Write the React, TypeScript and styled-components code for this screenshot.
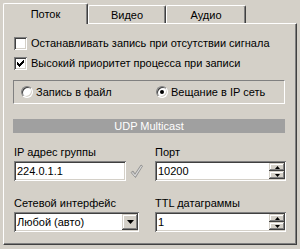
import styled, { createGlobalStyle } from 'styled-components';

const Global = createGlobalStyle`
    html, body {
        margin: 0;
        padding: 0;
        background: #d4d0c8;
    }
    * {
        box-sizing: border-box;
    }
`;

const face = '#d4d0c8';
const sunken = `inset 1px 1px #808080, inset -1px -1px #ffffff, inset 2px 2px #404040, inset -2px -2px ${face}`;
const raised = `inset -1px -1px #404040, inset 1px 1px ${face}, inset -2px -2px #808080, inset 2px 2px #ffffff`;

const Window = styled.div`
    width: 300px;
    height: 249px;
    padding: 3px 3px 4px 3px;
    background: ${face};
    font-family: "Liberation Sans", Arial, sans-serif;
    font-size: 11px;
    color: #000;
    display: flex;
    flex-direction: column;
`;

const TabStrip = styled.div`
    display: flex;
    align-items: flex-end;
    height: 20px;
    position: relative;
    z-index: 1;
`;

const Tab = styled.div<{ $active?: boolean; $w: number }>`
    width: ${p => p.$w}px;
    height: ${p => (p.$active ? 21 : 18)}px;
    margin-bottom: ${p => (p.$active ? -1 : 0)}px;
    background: ${face};
    border-left: 1px solid #fff;
    border-top: 1px solid #fff;
    border-right: 1px solid #404040;
    box-shadow: inset -1px 0 #808080;
    border-radius: 2px 2px 0 0;
    display: flex;
    justify-content: center;
    padding-top: ${p => (p.$active ? 4 : 3)}px;
    line-height: 13px;
`;

const Panel = styled.div`
    flex: 1;
    border-left: 1px solid #fff;
    border-top: 1px solid #fff;
    border-right: 1px solid #404040;
    border-bottom: 1px solid #404040;
    box-shadow: inset -1px -1px #808080;
    padding: 13px 9px 0 10px;
    display: flex;
    flex-direction: column;
`;

const CheckRow = styled.label<{ $gap?: number }>`
    display: flex;
    align-items: center;
    gap: 4px;
    height: 13px;
    margin-bottom: ${p => p.$gap ?? 0}px;
    line-height: 13px;
`;

const Box = styled.span`
    width: 13px;
    height: 13px;
    background: #fff;
    box-shadow: ${sunken};
    display: block;
    flex: none;
`;

const Tick = () => (
    <svg width="13" height="13" viewBox="0 0 13 13" shapeRendering="crispEdges" style={{ display: 'block' }}>
        {[[3, 5], [4, 6], [5, 7], [6, 6], [7, 5], [8, 4], [9, 3]].map(([x, y]) => (
            <rect key={x} x={x} y={y} width="1" height="3" fill="#000" />
        ))}
    </svg>
);

const RadioGroup = styled.div`
    margin: 10px 0 0 -1px;
    width: 272px;
    height: 24px;
    border-top: 1px solid #808080;
    border-left: 1px solid #808080;
    border-bottom: 1px solid #fff;
    border-right: 1px solid #fff;
    display: grid;
    grid-template-columns: 135px 1fr;
    align-items: center;
    padding-left: 7px;
`;

const RadioItem = styled.label`
    display: flex;
    align-items: center;
    gap: 3px;
    line-height: 13px;
`;

const Radio = styled.span<{ $on?: boolean }>`
    width: 12px;
    height: 12px;
    border-radius: 50%;
    background: #fff;
    border: 1px solid;
    border-color: #808080 #ffffff #ffffff #808080;
    box-shadow: inset 1px 1px #404040, inset -1px -1px ${face};
    display: flex;
    align-items: center;
    justify-content: center;
    flex: none;

    &::after {
        content: '';
        width: 4px;
        height: 4px;
        border-radius: 50%;
        background: #000;
        display: ${p => (p.$on ? 'block' : 'none')};
    }
`;

const SectionBar = styled.div`
    margin: 15px 0 0 -1px;
    width: 272px;
    height: 14px;
    background: #a0a0a0;
    color: #fff;
    text-align: center;
    line-height: 14px;
`;

const FieldGrid = styled.div`
    margin-top: 13px;
    display: grid;
    grid-template-columns: 141px 131px;
    row-gap: 16px;
`;

const Field = styled.div`
    display: flex;
    flex-direction: column;
    gap: 2px;
`;

const Label = styled.div`
    height: 13px;
    line-height: 13px;
`;

const InputRow = styled.div`
    display: flex;
    align-items: center;
    gap: 4px;
`;

const TextBox = styled.div<{ $w: number }>`
    width: ${p => p.$w}px;
    height: 20px;
    background: #fff;
    box-shadow: ${sunken};
    display: flex;
    align-items: center;
    padding: 0 2px 0 3px;
    line-height: 13px;
    position: relative;
`;

const Value = styled.span`
    flex: 1;
`;

const SpinButtons = styled.div`
    display: flex;
    flex-direction: column;
    margin-right: -1px;
`;

const SpinBtn = styled.div`
    width: 16px;
    height: 8px;
    background: ${face};
    box-shadow: ${raised};
    display: flex;
    align-items: center;
    justify-content: center;
`;

const DropBtn = styled.div`
    width: 16px;
    height: 16px;
    background: ${face};
    box-shadow: ${raised};
    display: flex;
    align-items: center;
    justify-content: center;
    margin-right: -1px;
`;

const Arrow = ({ up, w }: { up?: boolean; w: number }) => {
    const h = Math.ceil(w / 2);
    const pts = up ? `0,${h} ${w},${h} ${w / 2},0` : `0,0 ${w},0 ${w / 2},${h}`;
    return (
        <svg width={w} height={h} viewBox={`0 0 ${w} ${h}`} style={{ display: 'block' }}>
            <polygon points={pts} fill="#000" />
        </svg>
    );
};

const Spin = () => (
    <SpinButtons>
        <SpinBtn><Arrow up w={5} /></SpinBtn>
        <SpinBtn><Arrow w={5} /></SpinBtn>
    </SpinButtons>
);

const ApplyMark = () => (
    <svg width="13" height="15" viewBox="0 0 13 15" style={{ display: 'block' }}>
        <path d="M1 8.5 L3 7 L5 10 L11 1 L12.5 2 L5.5 13.5 Z" fill="#b4b4b4" stroke="#8c8c8c" strokeWidth="0.8" strokeLinejoin="round" />
        <path d="M2.2 8.4 L5 12 L11.6 2" fill="none" stroke="#e6e6e6" strokeWidth="0.8" />
    </svg>
);

export default function App() {
    return (
        <Window>
            <Global />
            <TabStrip>
                <Tab $active $w={85}>Поток</Tab>
                <Tab $w={78}>Видео</Tab>
                <Tab $w={80}>Аудио</Tab>
            </TabStrip>
            <Panel>
                <CheckRow $gap={7}>
                    <Box />
                    Останавливать запись при отсутствии сигнала
                </CheckRow>
                <CheckRow>
                    <Box><Tick /></Box>
                    Высокий приоритет процесса при записи
                </CheckRow>

                <RadioGroup>
                    <RadioItem><Radio />Запись в файл</RadioItem>
                    <RadioItem><Radio $on />Вещание в IP сеть</RadioItem>
                </RadioGroup>

                <SectionBar>UDP Multicast</SectionBar>

                <FieldGrid>
                    <Field>
                        <Label>IP адрес группы</Label>
                        <InputRow>
                            <TextBox $w={112}><Value>224.0.1.1</Value></TextBox>
                            <ApplyMark />
                        </InputRow>
                    </Field>
                    <Field>
                        <Label>Порт</Label>
                        <TextBox $w={131}><Value>10200</Value><Spin /></TextBox>
                    </Field>
                    <Field>
                        <Label>Сетевой интерфейс</Label>
                        <TextBox $w={125}><Value>Любой (авто)</Value><DropBtn><Arrow w={7} /></DropBtn></TextBox>
                    </Field>
                    <Field>
                        <Label>TTL датаграммы</Label>
                        <TextBox $w={131}><Value>1</Value><Spin /></TextBox>
                    </Field>
                </FieldGrid>
            </Panel>
        </Window>
    );
}
